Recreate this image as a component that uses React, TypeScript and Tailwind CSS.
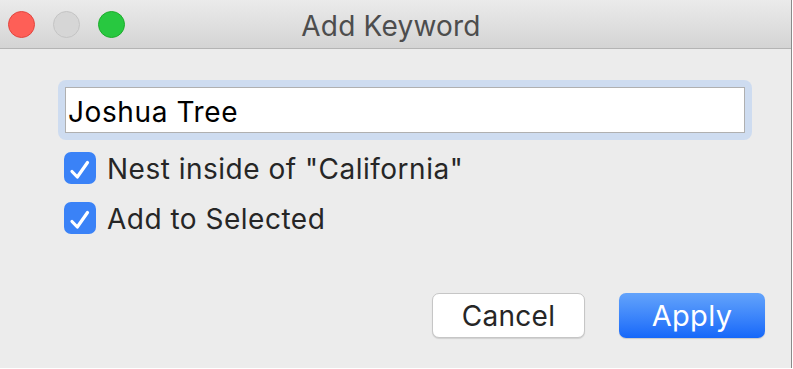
import { useState } from "react";

const font = { fontFamily: '"Inter", "Liberation Sans", sans-serif' };

function TrafficLights() {
  return (
    <div className="flex items-center gap-[18px] pl-[8px]">
      <span className="h-[27px] w-[27px] rounded-full border border-[#e2463f] bg-[#fe5f57]" />
      <span className="h-[27px] w-[27px] rounded-full border border-[#c4c4c4] bg-[#d6d6d6]" />
      <span className="h-[27px] w-[27px] rounded-full border border-[#1dad2b] bg-[#28c840]" />
    </div>
  );
}

function Checkbox({ checked, label, onToggle }: { checked: boolean; label: string; onToggle: () => void }) {
  return (
    <label className="flex items-center gap-[11px] cursor-default select-none" onClick={onToggle}>
      <span
        className={
          checked
            ? "flex h-[32px] w-[32px] items-center justify-center rounded-[7px] bg-[#3a82f7]"
            : "flex h-[32px] w-[32px] items-center justify-center rounded-[7px] border border-[#b8b8b8] bg-white"
        }
      >
        {checked && (
          <svg width="32" height="32" viewBox="0 0 32 32" fill="none">
            <path
              d="M8 19.5 L13.3 25 L23.5 10.5"
              stroke="white"
              strokeWidth="3.2"
              strokeLinecap="round"
              strokeLinejoin="round"
            />
          </svg>
        )}
      </span>
      <span className="pt-[2px] text-[28px] leading-none text-[#262626] tracking-[0.5px]">{label}</span>
    </label>
  );
}

export default function App() {
  const [keyword, setKeyword] = useState("Joshua Tree");
  const [nest, setNest] = useState(true);
  const [addSelected, setAddSelected] = useState(true);

  return (
    <div className="h-[369px] w-[793px] bg-white" style={font}>
      <div className="flex h-[368px] w-[792px] flex-col overflow-hidden border-r border-[#8a8a8a] bg-[#ececec]">
        <div className="relative flex h-[49px] shrink-0 items-center border-b border-[#b4b4b4] bg-gradient-to-b from-[#ebebeb] to-[#d4d4d4]">
          <TrafficLights />
          <div className="absolute inset-0 flex items-center justify-center pr-[9px] pt-[3px]">
            <span className="text-[28px] leading-none text-[#4d4d4d] tracking-[0.2px]">Add Keyword</span>
          </div>
        </div>

        <div className="flex flex-1 flex-col pl-[58px] pr-[26px] pt-[31px]">
          <div className="w-[694px] rounded-[8px] bg-[#cedcf0] p-[7px]">
            <input
              value={keyword}
              onChange={(e) => setKeyword(e.target.value)}
              className="h-[46px] w-full border border-[#b0b0b0] bg-white px-[2px] pt-[3px] text-[28px] tracking-[0.6px] text-black outline-none"
              style={font}
            />
          </div>

          <div className="mt-[12px] flex flex-col gap-[18px] pl-[6px]">
            <Checkbox checked={nest} label={'Nest inside of "California"'} onToggle={() => setNest(!nest)} />
            <Checkbox checked={addSelected} label="Add to Selected" onToggle={() => setAddSelected(!addSelected)} />
          </div>

          <div className="mt-[59px] flex justify-end gap-[34px]">
            <button className="h-[45px] w-[153px] rounded-[7px] border border-[#c6c6c6] bg-white text-[28px] tracking-[0.3px] text-[#262626] shadow-[0_1px_1px_rgba(0,0,0,0.12)]">
              Cancel
            </button>
            <button className="h-[45px] w-[146px] rounded-[7px] bg-gradient-to-b from-[#63a3fb] to-[#1567f9] text-[29px] tracking-[0.3px] text-white shadow-[0_1px_1px_rgba(0,0,0,0.15)]">
              Apply
            </button>
          </div>
        </div>
      </div>
    </div>
  );
}
